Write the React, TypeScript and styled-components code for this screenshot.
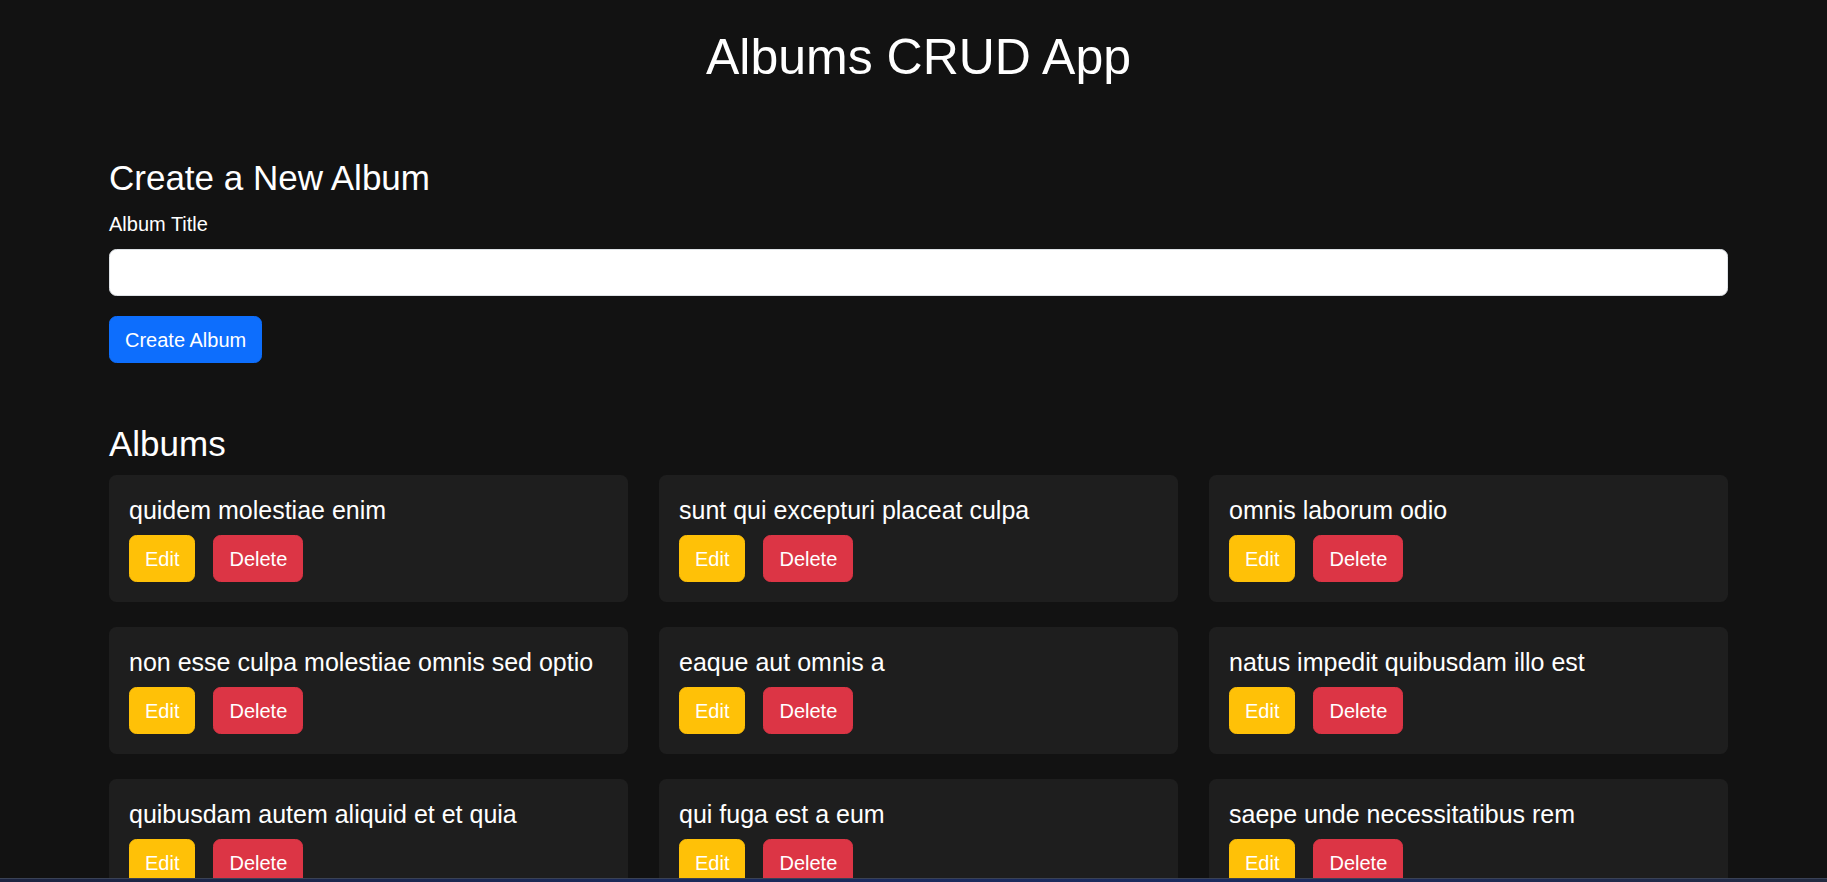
import React from "react";
import styled, { createGlobalStyle } from "styled-components";

const GlobalStyle = createGlobalStyle`
  * { box-sizing: border-box; }
  html, body {
    margin: 0;
    padding: 0;
    background: #121212;
    color: #ffffff;
    font-family: "Liberation Sans", Arial, sans-serif;
    font-size: 20px;
    line-height: 1.5;
  }
`;

const Page = styled.div`
  padding: 27px 99px 40px 109px;
`;

const Title = styled.h1`
  margin: 0;
  font-size: 50px;
  font-weight: 400;
  line-height: 1.2;
  text-align: center;
`;

const SectionTitle = styled.h2<{ $top: number }>`
  margin: ${(p) => p.$top}px 0 10px;
  font-size: 35px;
  font-weight: 400;
  line-height: 1.2;
`;

const Form = styled.form`
  display: flex;
  flex-direction: column;
  align-items: flex-start;
  margin-bottom: 60px;
`;

const Label = styled.label`
  display: block;
  font-size: 20px;
  line-height: 30px;
  margin-bottom: 10px;
`;

const Input = styled.input`
  display: block;
  width: 100%;
  height: 47px;
  margin: 0 0 20px;
  padding: 7.5px 15px;
  font-family: inherit;
  font-size: 20px;
  color: #212529;
  background: #ffffff;
  border: 1.25px solid #dee2e6;
  border-radius: 7.5px;
  outline: none;
`;

const Button = styled.button<{ $bg: string }>`
  height: 47px;
  padding: 0 15px;
  font-family: inherit;
  font-size: 20px;
  line-height: 1.5;
  color: #ffffff;
  background: ${(p) => p.$bg};
  border: 1.25px solid ${(p) => p.$bg};
  border-radius: 7.5px;
  cursor: pointer;
`;

const Grid = styled.div`
  display: grid;
  grid-template-columns: repeat(3, minmax(0, 1fr));
  column-gap: 31px;
  row-gap: 25px;
`;

const Card = styled.div`
  min-width: 0;
  background: #1e1e1e;
  border-radius: 7.5px;
  padding: 20px;
`;

const CardTitle = styled.h5`
  margin: 0 0 10px;
  font-size: 25px;
  font-weight: 400;
  line-height: 30px;
`;

const Actions = styled.div`
  display: flex;
  gap: 18px;
`;

const TaskbarEdge = styled.div`
  position: fixed;
  left: 0;
  right: 0;
  bottom: 0;
  height: 4px;
  background: linear-gradient(90deg, #1c2440 0%, #1a2a5c 40%, #1b2b5e 70%, #222a40 100%);
  border-top: 1px solid #3a4256;
`;

const albums = [
  "quidem molestiae enim",
  "sunt qui excepturi placeat culpa",
  "omnis laborum odio",
  "non esse culpa molestiae omnis sed optio",
  "eaque aut omnis a",
  "natus impedit quibusdam illo est",
  "quibusdam autem aliquid et et quia",
  "qui fuga est a eum",
  "saepe unde necessitatibus rem",
  "distinctio laborum qui",
  "quam nostrum impedit mollitia quod et dolor",
  "consequatur autem doloribus natus consectetur",
];

export default function App() {
  return (
    <>
      <GlobalStyle />
      <Page>
        <Title>Albums CRUD App</Title>
        <SectionTitle $top={70}>Create a New Album</SectionTitle>
        <Form onSubmit={(e) => e.preventDefault()}>
          <Label htmlFor="title">Album Title</Label>
          <Input id="title" type="text" />
          <Button $bg="#0d6efd" type="submit">Create Album</Button>
        </Form>
        <SectionTitle $top={0}>Albums</SectionTitle>
        <Grid>
          {albums.map((t) => (
            <Card key={t}>
              <CardTitle>{t}</CardTitle>
              <Actions>
                <Button $bg="#ffc107" type="button">Edit</Button>
                <Button $bg="#dc3545" type="button">Delete</Button>
              </Actions>
            </Card>
          ))}
        </Grid>
      </Page>
      <TaskbarEdge />
    </>
  );
}
